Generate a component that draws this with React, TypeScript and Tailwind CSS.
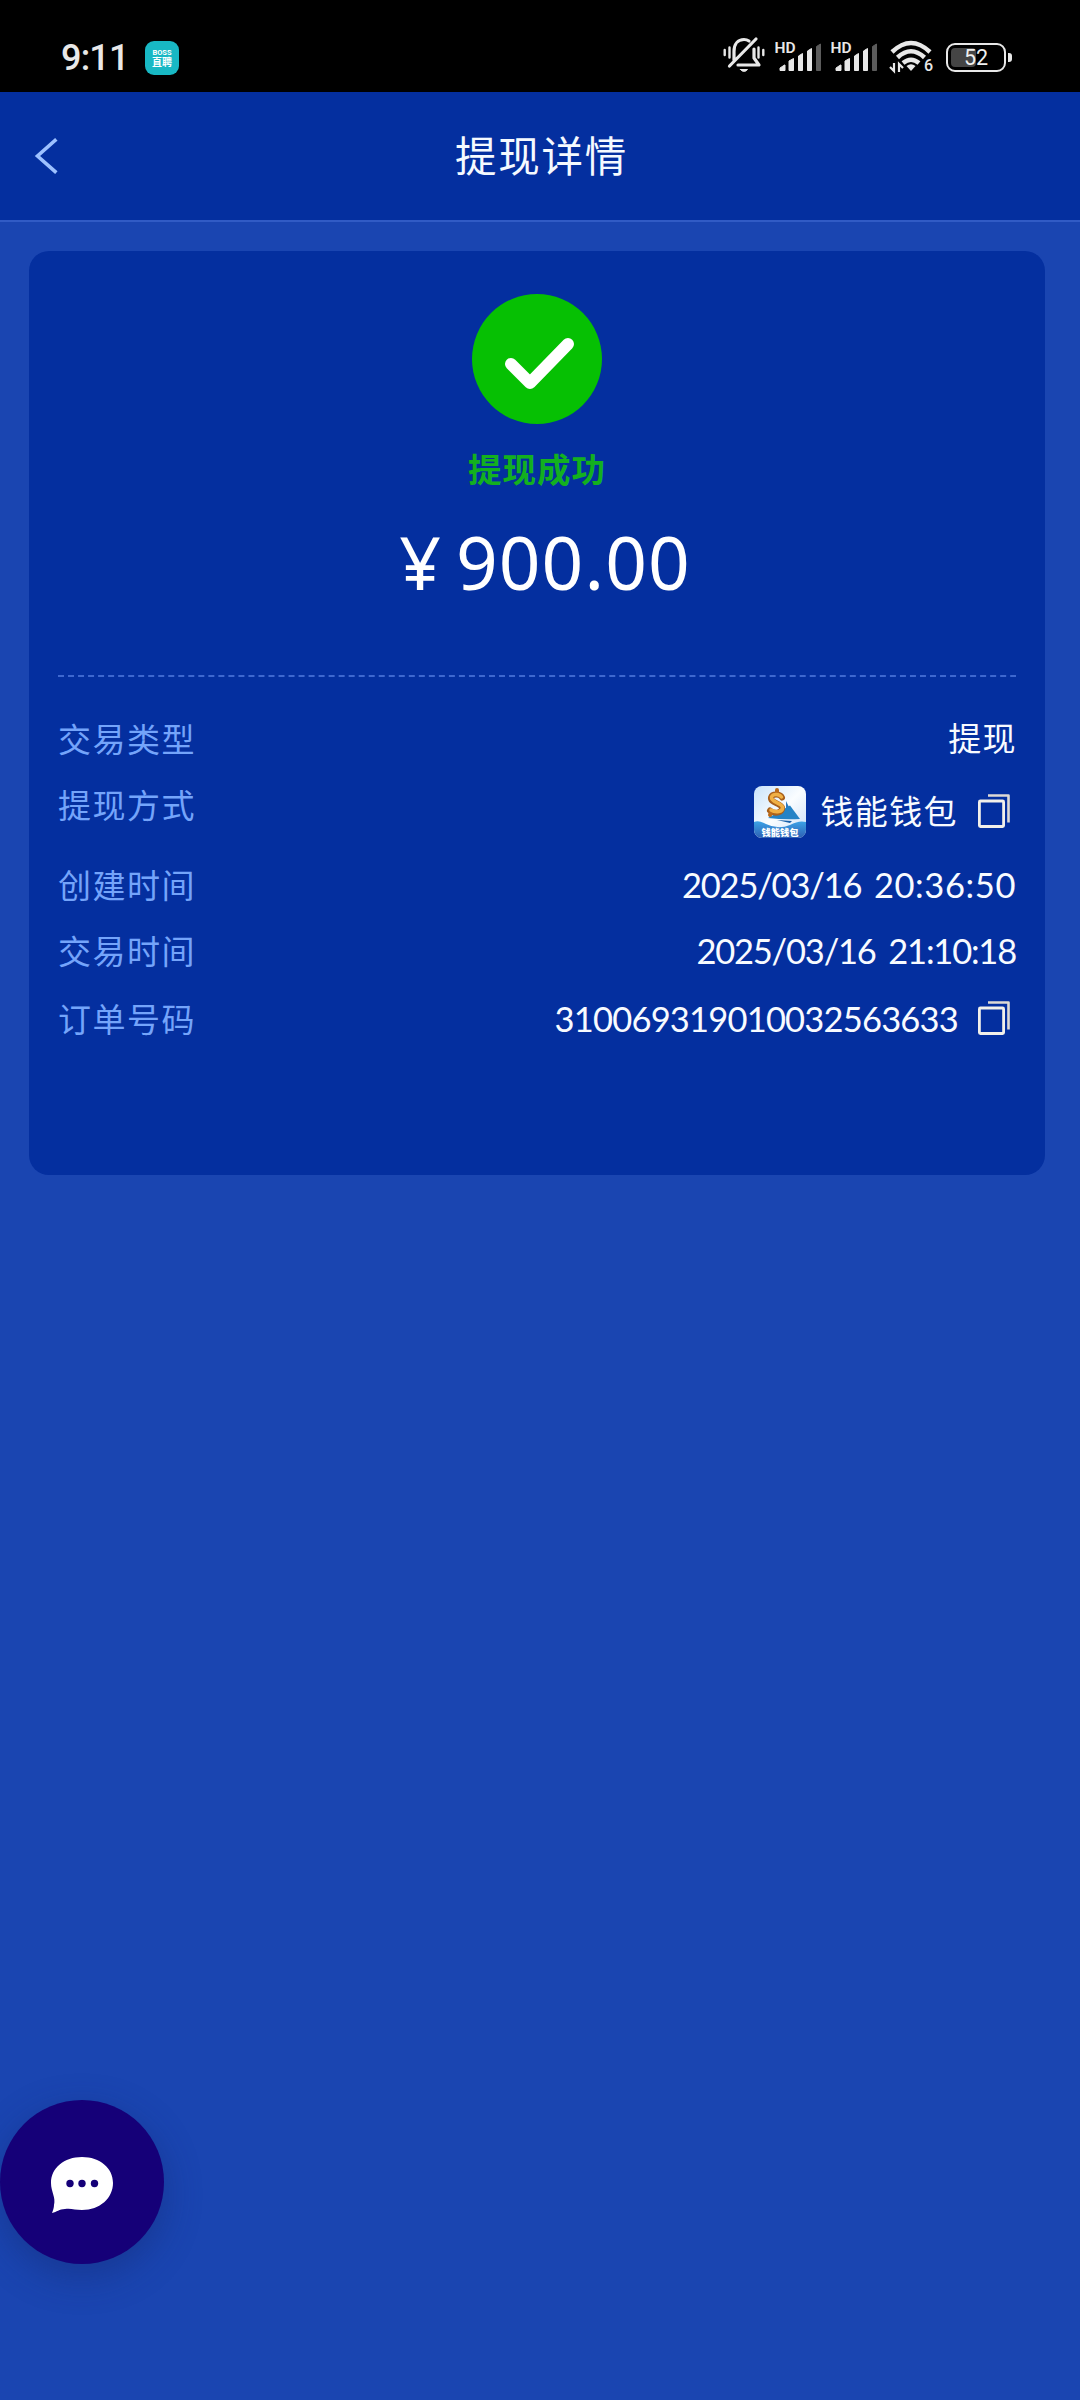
import { ReactNode } from "react";

type DetailRow = {
  label: string;
  value: string;
  time?: string;
  className: string;
  valueClassName: string;
  timeClassName?: string;
  wallet?: boolean;
  copy?: boolean;
};

const rows: DetailRow[] = [
  { label: "交易类型", value: "提现", className: "h-[66px]", valueClassName: "text-[33px] tracking-[1.4px] -mr-[1px]" },
  { label: "提现方式", value: "钱能钱包", className: "h-[80px]", valueClassName: "text-[33px] tracking-[1.4px]", wallet: true, copy: true },
  { label: "创建时间", value: "2025/03/16 ", time: "20:36:50", className: "h-[66px]", valueClassName: "text-[34.5px] tracking-[-1.2px]", timeClassName: "ml-[5px] tracking-[0.6px]" },
  { label: "交易时间", value: "2025/03/16 ", time: "21:10:18", className: "h-[67px]", valueClassName: "text-[34.5px] tracking-[-1.2px]", timeClassName: "ml-[5px] tracking-[-1.2px]" },
  { label: "订单号码", value: "310069319010032563633", className: "h-[66px] pt-[1px]", valueClassName: "text-[34.5px] tracking-[-0.8px]", copy: true },
];

function Signal() {
  return (
    <svg width="48" height="34" viewBox="0 0 48 34" className="shrink-0">
      <text x="-0.5" y="13" fontSize="15.5" fontWeight="600" fontFamily="Roboto, sans-serif" fill="#e8e8e8">
        HD
      </text>
      <path d="M5 30.500v-2.500l4.500-3h.5v5.500zM14 30.500V21l4.500-2.500v12zM23.500 30.500V16l4-2.500v17zM32.500 30.500V11l4-2.500v22z" fill="#e8e8e8" stroke="#e8e8e8" strokeLinejoin="round" />
      <path d="M41.500 30.500V6.500l4-2.500v26.500z" fill="#5c5c5c" stroke="#5c5c5c" strokeLinejoin="round" />
    </svg>
  );
}

function StatusBar() {
  return (
    <div className="flex h-[92px] shrink-0 items-start justify-between bg-black pl-[61px] pr-[68px] pt-[36px]">
      <div className="flex items-center">
        <span className="w-[66px] whitespace-nowrap font-['Roboto',sans-serif] text-[36px] font-medium leading-[44px] tracking-[-0.8px] text-[#e8e8e8]">
          9:11
        </span>
        <span className="ml-[18px] flex h-[34px] w-[34px] flex-col items-center justify-center rounded-[9px] bg-[#18b8c4] font-bold text-white">
          <span className="font-['Roboto',sans-serif] text-[7.5px] leading-[8px]">BOSS</span>
          <span className="text-[10px] leading-[11px]">直聘</span>
        </span>
      </div>
      <div className="flex items-start">
        <svg width="42" height="38" viewBox="0 0 42 38" fill="none" stroke="#e8e8e8" strokeWidth="3.2" strokeLinecap="round">
          <path d="M6.500 30 33 3M11 24V15.500C11 8 15 3.500 21 3.500c2 0 3.500.5 5 1.500M31 13v9l5 7H15" strokeLinejoin="round" />
          <path d="M1.700 14v5M6.500 11.500v10M35.500 11.500v10M40.300 14v5" strokeWidth="2.4" />
          <path d="M17.500 33.500h7c-1 1.400-2 1.800-3.500 1.800s-2.500-.4-3.500-1.800z" fill="#e8e8e8" strokeWidth="1" />
        </svg>
        <div className="ml-[10px] mt-[4px] flex gap-[8px]">
          <Signal />
          <Signal />
        </div>
        <svg width="46" height="38" viewBox="0 0 46 38" className="ml-[10px]" fill="none" stroke="#e8e8e8">
          <path d="M3 16Q22 -2 41 16" strokeWidth="4.5" />
          <path d="M8.500 21.500Q22 9 35.500 21.500" strokeWidth="4.5" />
          <path d="M14 27Q22 20.500 30 27" strokeWidth="4.5" />
          <path d="m22 35-4.500-5q4.500-3.500 9 0z" fill="#e8e8e8" stroke="none" />
          <path d="M5 27v8l-4-4M10 36v-8l4 4" strokeWidth="2.2" />
          <text x="35" y="35" fontSize="16" fontWeight="500" fontFamily="Roboto, sans-serif" fill="#e8e8e8" stroke="none">
            6
          </text>
        </svg>
        <div className="ml-[11px] mt-[7px] flex items-center">
          <div className="flex h-[29px] w-[60px] rounded-[9px] border-[2.5px] border-[#e8e8e8] p-[3px]">
            <div className="flex w-[25px] justify-start rounded-[4px] bg-[#454545]">
              <span className="ml-[13px] font-['Roboto',sans-serif] text-[21.5px] leading-[20px] text-[#f0f0f0]">
                52
              </span>
            </div>
          </div>
          <div className="ml-[2px] h-[9px] w-[4px] rounded-r-[3px] bg-[#e8e8e8]" />
        </div>
      </div>
    </div>
  );
}

function WalletLogo() {
  return (
    <svg width="52" height="52" viewBox="0 0 52 52" className="shrink-0">
      <defs>
        <linearGradient id="sky" x1="0" y1="0" x2="1" y2="1">
          <stop offset="0" stopColor="#c9e3fb" />
          <stop offset="0.5" stopColor="#fafdff" />
          <stop offset="1" stopColor="#c9ddf7" />
        </linearGradient>
        <linearGradient id="sea" x1="0" y1="0" x2="0" y2="1">
          <stop offset="0" stopColor="#3ca2e6" />
          <stop offset="1" stopColor="#2d5fb4" />
        </linearGradient>
        <clipPath id="tile">
          <rect width="52" height="52" rx="8" />
        </clipPath>
      </defs>
      <g clipPath="url(#tile)">
        <rect width="52" height="52" fill="url(#sky)" />
        <path d="M0 36q5-2 12 2 12 6 24 1 9-5 16-3v16H0z" fill="url(#sea)" />
        <path d="m32 15 3 6-3 5z" fill="#2a78c0" />
        <path d="M14 32 36 19.500 46 33q-16 1-32-1z" fill="#2583c6" />
        <path d="m23 34 15 1-2 2z" fill="#185fa8" />
        <g fill="none" strokeLinecap="round">
          <path d="M28 11.500c-2-4-10-4-11 0-1 5 10 6 11 10 1 5-7 7-12 3" stroke="#a8601c" strokeWidth="6" />
          <path d="M23 4v4M17 26l-1 3" stroke="#b96a1c" strokeWidth="4" />
          <path d="M27.500 11c-2-3.500-9-3.500-10 0-1 5 10 6 11 10 1 5-7 6-11.500 3" stroke="#f0b045" strokeWidth="3.5" />
        </g>
        <text x="26" y="49.5" textAnchor="middle" fontSize="9.3" fontWeight="900" fontFamily="Noto Sans CJK SC, sans-serif" fill="#fff">
          钱能钱包
        </text>
      </g>
    </svg>
  );
}

function CopyIcon() {
  return (
    <svg width="32" height="34" viewBox="0 0 32 34" fill="none" className="shrink-0">
      <path d="M10 1.500h20.500V28.500" stroke="#dedad5" strokeWidth="2.6" strokeLinejoin="round" />
      <rect x="1.400" y="7" width="24.200" height="25.500" rx="1" stroke="#f2f0ea" strokeWidth="2.8" />
    </svg>
  );
}

function Row({ label, className, children }: { label: string; className: string; children: ReactNode }) {
  return (
    <div className={`flex justify-between ${className}`}>
      <span className="text-[33px] leading-[50px] tracking-[1.5px] text-[#74a4fa]">{label}</span>
      {children}
    </div>
  );
}

export default function App() {
  return (
    <div className="flex h-[2400px] w-[1080px] flex-col overflow-hidden bg-[#1a45b1] font-['Lato','Noto_Sans_CJK_SC',sans-serif]">
      <StatusBar />

      {/* header */}
      <div className="grid h-[130px] shrink-0 grid-cols-[120px_1fr_120px] items-center border-b-2 border-[#315bc5] bg-[#042f9f]">
        <svg width="24" height="36" viewBox="0 0 24 36" className="ml-[34px]" fill="none">
          <path d="M21 2.500 3.500 18 21 33.500" stroke="#9dc1ff" strokeWidth="3.6" strokeLinecap="square" />
        </svg>
        <h1 className="pl-[3px] text-center text-[41.5px] leading-[60px] tracking-[1.8px] text-[#f5faff]">提现详情</h1>
      </div>

      {/* card */}
      <div className="ml-[29px] mt-[29px] h-[924px] w-[1016px] shrink-0 rounded-[20px] bg-[#042f9f] px-[29px] pt-[43px]">
        <div className="flex flex-col items-center">
          <svg width="130" height="130" viewBox="0 0 130 130">
            <circle cx="65" cy="65" r="65" fill="#06c003" />
            <path d="m39 70 19 19 38-39" fill="none" stroke="#fff" strokeWidth="12" strokeLinecap="round" strokeLinejoin="round" />
          </svg>
          <p className="mt-[20px] text-[33.5px] font-bold leading-[50px] tracking-[1px] text-[#13b01f]">提现成功</p>
          <p className="mt-[28px] flex items-baseline whitespace-pre pl-[16px] font-['Noto_Sans',sans-serif] text-[73px] leading-[80px] text-white">
            <span>¥</span>
            <span className="ml-[15px] tracking-[1.1px]">900.00</span>
          </p>
        </div>

        <svg width="958" height="2" className="mt-[73px]">
          <path d="M0 1h958" stroke="#3e68cf" strokeWidth="2" strokeDasharray="6 4.023" />
        </svg>

        <div className="mt-[37px]">
          {rows.map((row) => (
            <Row key={row.label} label={row.label} className={row.className}>
              <div className={`flex items-center ${row.wallet ? "h-[64px]" : "h-[50px]"}`}>
                {row.wallet && <WalletLogo />}
                <span className={`whitespace-pre text-[#f8fbff] ${row.wallet ? "ml-[14px]" : ""} ${row.valueClassName}`}>
                  {row.value}
                  {row.time && <span className={row.timeClassName}>{row.time}</span>}
                </span>
                {row.copy && (
                  <span className="-mt-[3px] ml-[20px] mr-[6px]">
                    <CopyIcon />
                  </span>
                )}
              </div>
            </Row>
          ))}
        </div>
      </div>

      {/* chat button */}
      <button className="mb-[136px] mt-auto flex h-[164px] w-[164px] shrink-0 items-center justify-center rounded-full bg-[#150078] shadow-[0_12px_36px_rgba(20,40,110,0.45)]">
        <svg width="64" height="58" viewBox="0 0 64 58" className="mt-[5px]">
          <path d="M32 1C14 1 1 12 1 27c0 9 5 14 3 22 0 3-1 5-2 8 5-1 7-4 13-4 6-1 10 1 17 1 18 0 31-12 31-27S50 1 32 1z" fill="#fff" />
          <circle cx="20" cy="27.500" r="3.700" fill="#150078" />
          <circle cx="32" cy="27.500" r="3.700" fill="#150078" />
          <circle cx="44.500" cy="27.500" r="3.700" fill="#150078" />
        </svg>
      </button>
    </div>
  );
}
